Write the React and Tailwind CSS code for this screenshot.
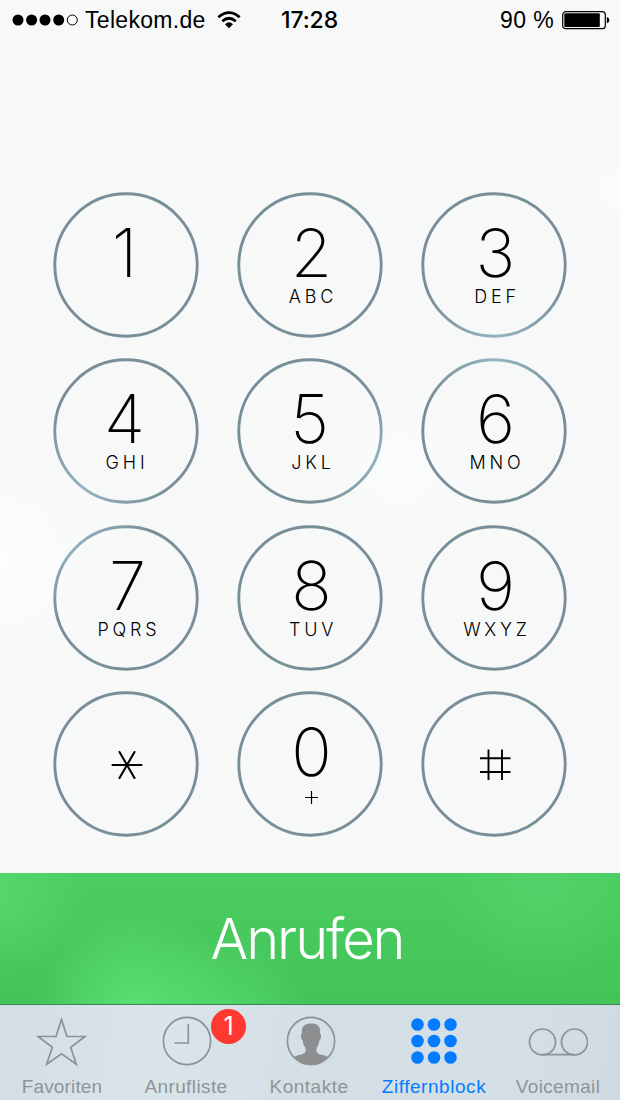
import React from "react";

// glow = centre of the lighter patch on the ring, in ring coordinates
const keys = [
  { digit: "1", nudge: "-translate-x-[2px]" },
  { digit: "2", letters: "ABC" },
  { digit: "3", letters: "DEF", glow: [74, 150] },
  { digit: "4", letters: "GHI", nudge: "-translate-x-[2px]", lettersNudge: "-translate-x-[2px]", glow: [25, 135] },
  { digit: "5", letters: "JKL", nudge: "-translate-x-px", glow: [150, 105] },
  { digit: "6", letters: "MNO", glow: [74, -5] },
  { digit: "7", letters: "PQRS", glow: [15, 10] },
  { digit: "8", letters: "TUV" },
  { digit: "9", letters: "WXYZ" },
  { digit: "*" },
  { digit: "0", letters: "+" },
  { digit: "#" },
];

const Ring = ({ id, glow = [-200, -200] }) => (
  <svg className="absolute inset-0 overflow-visible" width="145" height="145" viewBox="0 0 145 145" fill="none">
    <defs>
      <radialGradient id={id} gradientUnits="userSpaceOnUse" cx={glow[0]} cy={glow[1]} r="85">
        <stop offset="0" stopColor="#94b5c2" />
        <stop offset="0.4" stopColor="#89a5b1" />
        <stop offset="1" stopColor="#788e98" />
      </radialGradient>
    </defs>
    <circle cx="72" cy="72" r="71.2" stroke={`url(#${id})`} strokeWidth="2.9" />
  </svg>
);

const Star = () => (
  <svg width="32" height="32" viewBox="0 0 32 32" fill="none" stroke="black" strokeWidth="2.1" strokeLinecap="round">
    <path d="M1.5 16H30.5M8.5 3L23.5 29M23.5 3L8.5 29" />
  </svg>
);

const Hash = () => (
  <svg width="32" height="32" viewBox="0 0 32 32" fill="none" stroke="black" strokeWidth="1.9">
    <path d="M0 9.3H30.5M0 23H30.5M8.5 .5V31M22 .5V31" />
  </svg>
);

const Key = ({ item, index }) => {
  const { digit, letters, nudge = "translate-x-px", lettersNudge = "", glow } = item;
  return (
    <button className="relative w-[145px] h-[145px] rounded-full flex flex-col items-center">
      <Ring id={`ring-${index}`} glow={glow} />
      {digit === "*" && <span className="mt-[57px] ml-px"><Star /></span>}
      {digit === "#" && <span className="mt-[57px] ml-[2px]"><Hash /></span>}
      {digit !== "*" && digit !== "#" && (
        <span className={`mt-[25px] h-[70px] leading-[70px] text-[67px] font-extralight font-['Inter',sans-serif] ${nudge}`}>
          {digit}
        </span>
      )}
      {letters === "+" && (
        <svg className="mt-[4px] ml-px" width="13" height="13" viewBox="0 0 13 13" stroke="black" strokeWidth="1.2">
          <path d="M0 6.5H13M6.5 0V13" />
        </svg>
      )}
      {letters && letters !== "+" && (
        <span
          className={`h-[18px] leading-[18px] pl-[5px] text-[18px] tracking-[3.8px] font-light font-['Inter',sans-serif] ${lettersNudge}`}
        >
          {letters}
        </span>
      )}
    </button>
  );
};

const StatusBar = () => (
  <div className="h-10 flex items-center pl-3 pr-[10px] text-[23px] font-['Liberation_Sans',sans-serif]">
    <svg width="66" height="12" viewBox="0 0 66 12">
      <circle cx="6" cy="6" r="5.5" />
      <circle cx="19.6" cy="6" r="5.5" />
      <circle cx="33" cy="6" r="5.5" />
      <circle cx="46.7" cy="6" r="5.5" />
      <circle cx="60.3" cy="6" r="5" fill="none" stroke="black" />
    </svg>
    <span className="w-[120px] ml-[7px] tracking-[0.3px]">Telekom.de</span>
    <svg className="ml-[12px]" width="24" height="18" viewBox="0 0 24 18" fill="none" stroke="black" strokeWidth="2.7">
      <path d="M1.3 6.2Q12 -3 22.7 6.2" />
      <path d="M5.2 10.2Q12 4.3 18.8 10.2" />
      <path d="M8 13.2Q12 9.5 16 13.2L12 17.3Z" fill="black" stroke="none" />
    </svg>
    <span className="ml-[40px] w-[60px] font-['Inter',sans-serif] font-medium tracking-[-0.1px]">17:28</span>
    <span className="ml-auto tracking-[0.4px]">90 %</span>
    <svg className="ml-[8px]" width="48" height="19" viewBox="0 0 48 19" fill="none">
      <rect x=".7" y=".7" width="42.6" height="17" rx="3" stroke="black" strokeWidth="1.2" />
      <rect x="2.3" y="2.3" width="35.5" height="13.8" rx="1" fill="black" />
      <path d="M44.8 6Q47.3 6.5 47.3 9.2T44.8 12.5Z" fill="black" />
    </svg>
  </div>
);

const tabs = [
  {
    label: "Favoriten",
    tracking: "tracking-[0.15px]",
    icon: (
      <svg width="52" height="50" viewBox="0 0 52 50" fill="none" stroke="#8c9296" strokeWidth="1.7">
        <path d="M25.5 3.5L31 20.5H49L34.7 31.2L40.3 48.2L25.5 37.7L10.7 48.2L16.3 31.2L2 20.5H20Z" />
      </svg>
    ),
  },
  {
    label: "Anrufliste",
    tracking: "tracking-[0.4px]",
    badge: 1,
    icon: (
      <svg className="ml-[2px]" width="50" height="50" viewBox="0 0 50 50" fill="none" stroke="#8c9296" strokeWidth="1.7">
        <circle cx="25" cy="25" r="23.6" />
        <path d="M26.3 8V27H12.5" />
      </svg>
    ),
  },
  {
    label: "Kontakte",
    tracking: "tracking-[0.5px] -translate-x-px",
    icon: (
      <svg className="ml-[2px]" width="50" height="50" viewBox="0 0 50 50" fill="none">
        <path
          d="M8 41C14 38 19 39 19.5 35V32C17.5 29.5 17 27 16.5 24C14.5 23 14.5 18 16 17.5C15 10 19 7.5 25.5 7.5C32 7.5 35 11 34 17.5C35.5 18 35.5 23 33.5 24C33 27 32 30 30.5 32V35C31 39 36 38 42 41C33 51 17 51 8 41Z"
          fill="#8e8f90"
        />
        <circle cx="25" cy="25" r="23.6" stroke="#8c9296" strokeWidth="1.7" />
      </svg>
    ),
  },
  {
    label: "Ziffernblock",
    tracking: "tracking-[0.55px]",
    active: true,
    icon: (
      <svg width="46" height="50" viewBox="0 0 46 50" fill="#057bff">
        {[8.5, 25, 41.5].map((y) =>
          [6.5, 23, 39.5].map((x) => <circle key={`${x}-${y}`} cx={x} cy={y} r="6.3" />)
        )}
      </svg>
    ),
  },
  {
    label: "Voicemail",
    tracking: "tracking-[0.35px]",
    icon: (
      <svg width="60" height="50" viewBox="0 0 60 50" fill="none" stroke="#8c9296" strokeWidth="1.7">
        <circle cx="14.5" cy="26" r="13" />
        <circle cx="46.5" cy="26" r="13" />
        <path d="M14.5 38.7H46.5" />
      </svg>
    ),
  },
];

const TabBar = () => (
  <div className="h-24 grid grid-cols-[124px_124px_124px_124px_124px] border-t border-[#43815a] bg-[linear-gradient(100deg,#d3dee5_0%,#d9e5e9_25%,#d3dee5_55%,#d5e0e6_80%,#cfdbe1_100%)]">
    {tabs.map((tab) => (
      <div key={tab.label} className="relative flex flex-col items-center pt-[11px]">
        {tab.icon}
        <span
          className={`mt-[9px] leading-6 text-[19px] whitespace-nowrap font-['Liberation_Sans',sans-serif] ${tab.tracking} ${
            tab.active ? "text-[#057bff]" : "text-[#8e9499]"
          }`}
        >
          {tab.label}
        </span>
        {tab.badge && (
          <span className="absolute left-[87px] top-[4px] w-[35px] h-[35px] rounded-full bg-[#ff3830] text-white text-[25px] leading-[35px] text-center font-['Inter',sans-serif]">
            {tab.badge}
          </span>
        )}
      </div>
    ))}
  </div>
);

const App = () => {
  return (
    <div className="w-[620px] h-[1100px] flex flex-col overflow-hidden text-black bg-[#f7f8f8] bg-[radial-gradient(circle_at_0px_560px,#fbfdfe_0px,transparent_130px),radial-gradient(circle_at_400px_470px,#fafcfd_0px,transparent_90px),radial-gradient(circle_at_620px_190px,#fbfcfd_0px,transparent_40px)]">
      <StatusBar />
      <div className="h-[833px] pt-[152.5px] pl-[54px] grid grid-cols-[145px_145px_145px] gap-x-[39px] gap-y-[21.5px] content-start">
        {keys.map((item, index) => (
          <Key key={item.digit} item={item} index={index} />
        ))}
      </div>
      <button className="h-[131px] w-full pr-[6px] pt-[1px] text-white text-[56px] font-['Inter',sans-serif] font-light tracking-[-2px] bg-[#48ca5e] bg-[radial-gradient(circle_at_135px_135px,#5bdf72_0px,transparent_100px),radial-gradient(circle_at_220px_150px,#54d86a_0px,transparent_90px),radial-gradient(circle_at_0px_20px,#55d76b_0px,transparent_85px),radial-gradient(circle_at_540px_10px,#52d268_0px,transparent_100px),linear-gradient(#4ccd62,#43c459)]">
        Anrufen
      </button>
      <TabBar />
    </div>
  );
};

export default App;
